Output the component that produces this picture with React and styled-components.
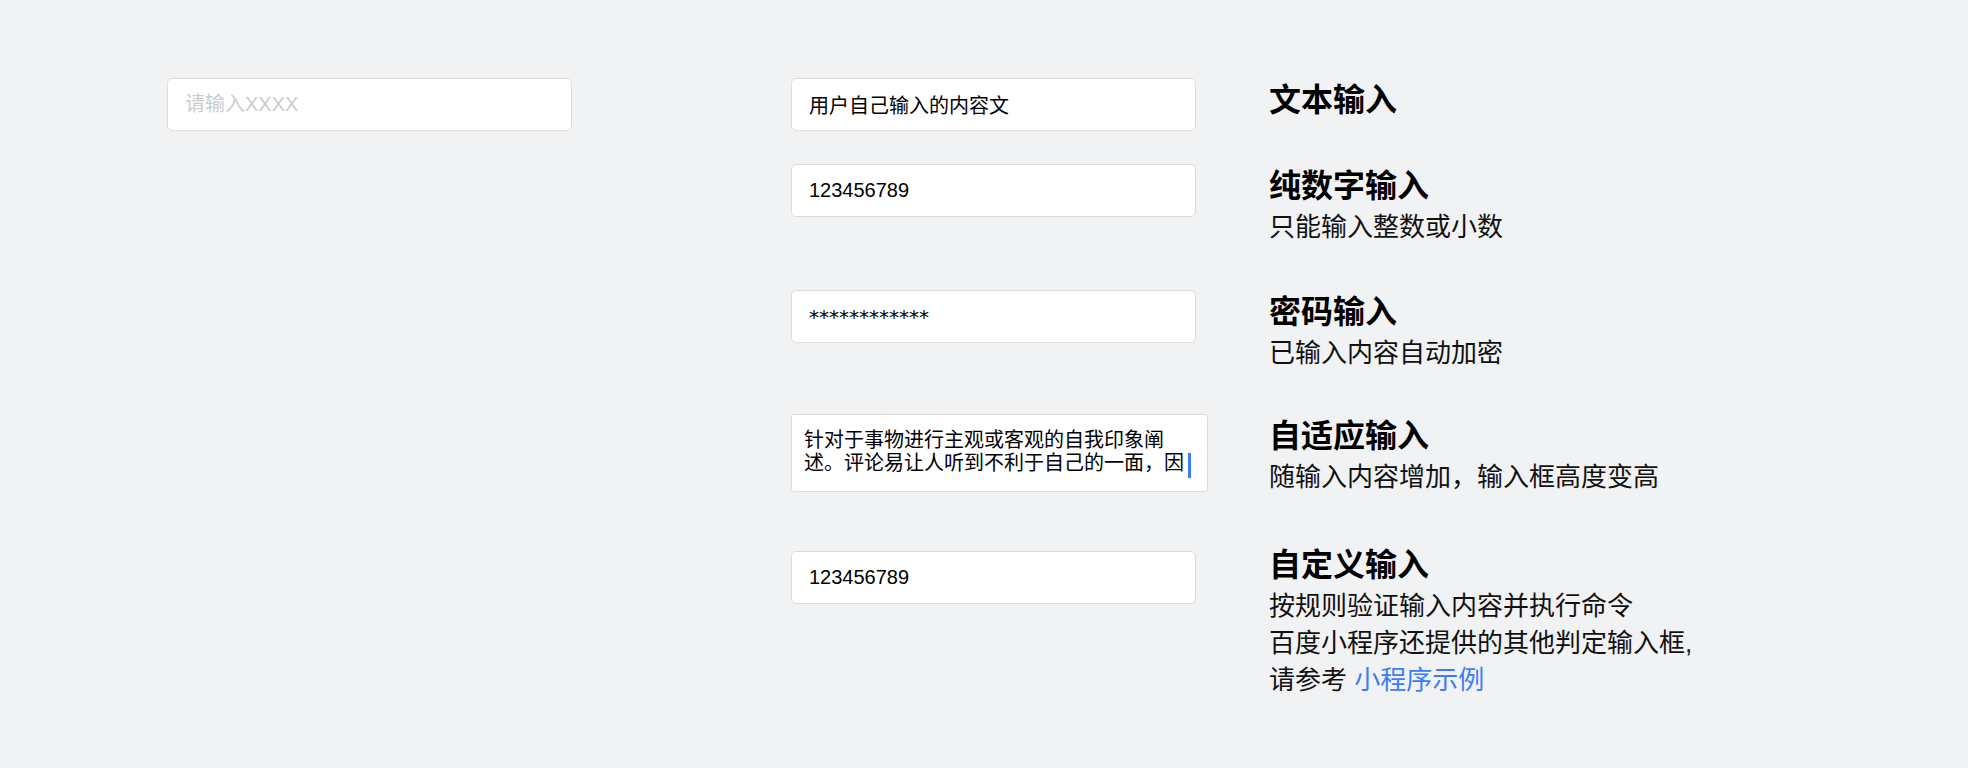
import React from "react";
import styled, { createGlobalStyle } from "styled-components";

const GlobalStyle = createGlobalStyle`
  html, body {
    margin: 0;
    padding: 0;
    background: #f1f2f4;
  }
  body {
    font-family: "Liberation Sans", "Noto Sans CJK SC", sans-serif;
    color: #000;
  }
`;

const rows = [
  {
    key: "text",
    top: 0,
    value: "用户自己输入的内容文",
    title: "文本输入",
    lines: [],
  },
  {
    key: "number",
    top: 33,
    value: "123456789",
    title: "纯数字输入",
    lines: ["只能输入整数或小数"],
  },
  {
    key: "password",
    top: 44,
    value: "************",
    password: true,
    title: "密码输入",
    lines: ["已输入内容自动加密"],
  },
  {
    key: "auto",
    top: 42,
    area: true,
    value: "针对于事物进行主观或客观的自我印象阐述。评论易让人听到不利于自己的一面，因",
    title: "自适应输入",
    lines: ["随输入内容增加，输入框高度变高"],
  },
  {
    key: "custom",
    top: 47,
    fieldOffset: 8,
    value: "123456789",
    title: "自定义输入",
    lines: ["按规则验证输入内容并执行命令", "百度小程序还提供的其他判定输入框,"],
    link: true,
  },
];

const App = () => {
  return (
    <>
      <GlobalStyle />
      <Page>
        <LeftColumn>
          <TextInput placeholder="请输入XXXX" readOnly />
        </LeftColumn>
        <Examples>
          {rows.map((row) => (
            <Row key={row.key} $top={row.top}>
              <FieldCell $offset={row.fieldOffset || 0}>
                {row.area ? (
                  <AutoArea>
                    {row.value}
                    <Caret />
                  </AutoArea>
                ) : (
                  <TextInput
                    value={row.value}
                    readOnly
                    $password={row.password}
                  />
                )}
              </FieldCell>
              <Description>
                <Title>{row.title}</Title>
                {row.lines.map((line) => (
                  <Line key={line}>{line}</Line>
                ))}
                {row.link && (
                  <Line>
                    请参考 <DemoLink href="#">小程序示例</DemoLink>
                  </Line>
                )}
              </Description>
            </Row>
          ))}
        </Examples>
      </Page>
    </>
  );
};

const Page = styled.main`
  display: flex;
  align-items: flex-start;
  gap: 219px;
  padding: 78px 0 0 167px;
  min-height: 100vh;
  box-sizing: border-box;
`;

const LeftColumn = styled.div`
  width: 405px;
`;

const Examples = styled.div`
  display: flex;
  flex-direction: column;
`;

const Row = styled.section`
  display: flex;
  align-items: flex-start;
  margin-top: ${(p) => p.$top}px;
`;

const FieldCell = styled.div`
  width: 477px;
  flex-shrink: 0;
  padding-top: ${(p) => p.$offset}px;
`;

const TextInput = styled.input`
  display: block;
  box-sizing: border-box;
  width: 405px;
  height: 53px;
  padding: 0 17px;
  margin: 0;
  border: 1px solid #dcdcdc;
  border-radius: 5px;
  background: #fff;
  outline: none;
  font-family: ${(p) =>
    p.$password
      ? `"DejaVu Sans", sans-serif`
      : `"Liberation Sans", "Noto Sans CJK SC", sans-serif`};
  font-size: 20px;
  color: #000;

  &::placeholder {
    color: #cccccc;
  }
`;

const AutoArea = styled.div`
  box-sizing: border-box;
  width: 417px;
  padding: 14px 12px 13px;
  border: 1px solid #dcdcdc;
  border-radius: 3px;
  background: #fff;
  font-size: 20px;
  line-height: 23px;
  color: #000;
`;

const Caret = styled.span`
  display: inline-block;
  width: 3px;
  height: 25px;
  margin-left: 4px;
  background: #3c7bfa;
  vertical-align: -8px;
`;

const Description = styled.div`
  display: flex;
  flex-direction: column;
  margin-left: 1px;
`;

const Title = styled.h3`
  margin: 0;
  font-size: 32px;
  line-height: 45px;
  font-weight: 700;
  color: #000;
`;

const Line = styled.p`
  margin: 0;
  font-size: 26px;
  line-height: 37px;
  color: #111;
`;

const DemoLink = styled.a`
  color: #3c7bfa;
  text-decoration: none;
`;

export default App;
